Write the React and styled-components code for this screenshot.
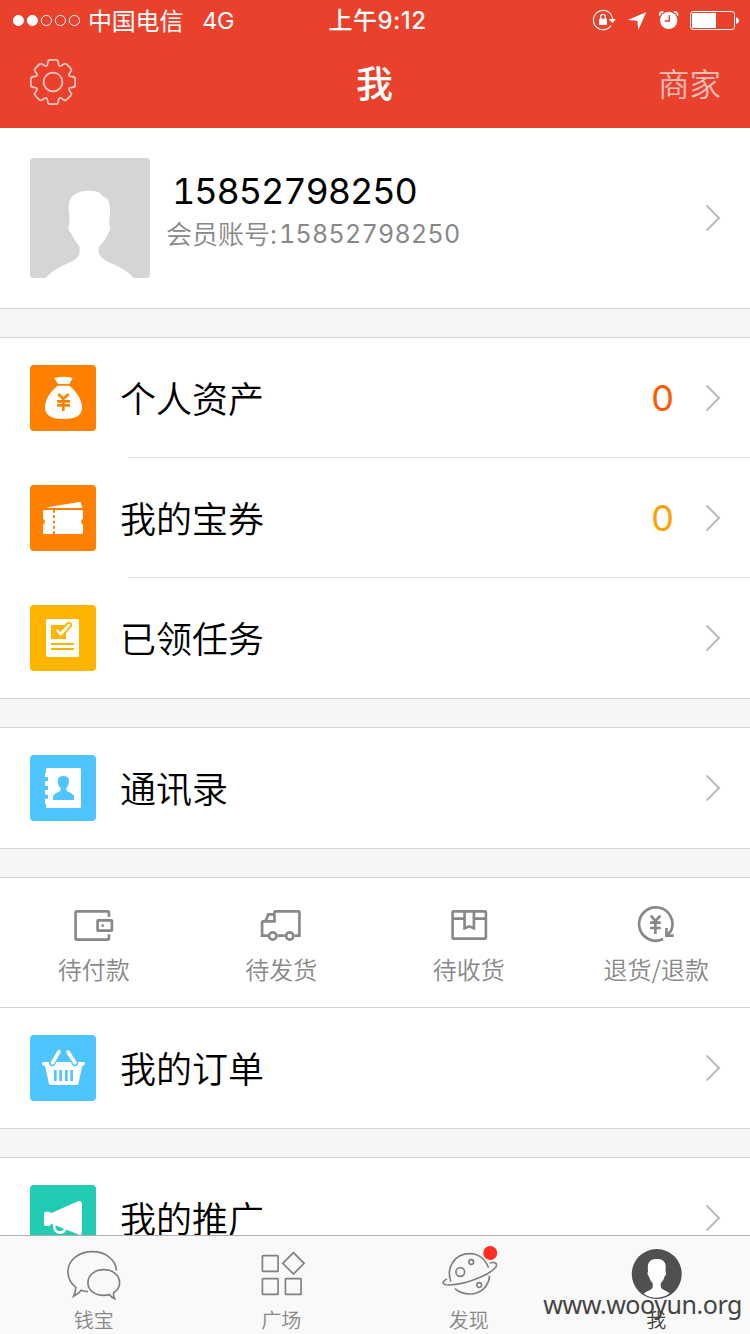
import React from 'react';
import styled, { createGlobalStyle } from 'styled-components';

const GlobalStyle = createGlobalStyle`
  *, *::before, *::after { box-sizing: border-box; }
  body { margin: 0; background: #fff; }
  svg { display: block; flex: none; }
`;

const latin = `Inter, "Noto Sans CJK SC", sans-serif`;
const cjk = `"Noto Sans CJK SC", sans-serif`;

const Screen = styled.div`
  position: relative;
  width: 750px;
  height: 1334px;
  overflow: hidden;
  display: flex;
  flex-direction: column;
  background: #f6f6f6;
  font-family: ${latin};
  color: #000;
`;

const Header = styled.header`
  flex: none;
  height: 128px;
  background: #ea412c;
  color: #fff;
`;

const StatusBar = styled.div`
  height: 40px;
  padding: 0 10px 0 12px;
  display: grid;
  grid-template-columns: 1fr auto 1fr;
  align-items: center;
`;

const StatusGroup = styled.div`
  display: flex;
  align-items: center;
  justify-content: ${(p) => (p.$end ? 'flex-end' : 'flex-start')};
`;

const Carrier = styled.span`
  margin-left: 7px;
  font: 400 24px/40px ${cjk};
  letter-spacing: -0.2px;
`;

const Network = styled.span`
  margin-left: 19px;
  padding-top: 2px;
  font: 400 23.5px/38px ${latin};
  letter-spacing: -0.5px;
`;

const Clock = styled.span`
  padding: 2px 0 0 3px;
  font: 500 24px/38px ${latin};
  letter-spacing: 0.5px;
`;

const NavBar = styled.div`
  height: 84px;
  padding: 0 29px 0 27px;
  display: grid;
  grid-template-columns: 1fr auto 1fr;
  align-items: center;
`;

const Title = styled.h1`
  margin: 0;
  padding-left: 1px;
  font: 500 37px/84px ${cjk};
`;

const NavAction = styled.span`
  justify-self: end;
  font: 350 31.5px/84px ${cjk};
  color: rgba(255, 255, 255, 0.68);
`;

const Content = styled.main`
  flex: 1;
  min-height: 0;
  overflow: hidden;
  display: flex;
  flex-direction: column;
  gap: 28px;
`;

const Section = styled.section`
  flex: none;
  background: #fff;
  border-top: ${(p) => (p.$first ? '0' : '1px solid #d2d2d2')};
  border-bottom: 1px solid #d2d2d2;
`;

const Profile = styled.div`
  height: 180px;
  padding: 0 29px 0 30px;
  display: flex;
  align-items: center;
`;

const Avatar = styled.div`
  width: 120px;
  height: 120px;
  border-radius: 4px;
  overflow: hidden;
  background: #d5d5d5;
`;

const ProfileText = styled.div`
  flex: 1;
  height: 120px;
  padding: 10px 0 0 16px;
`;

const Phone = styled.div`
  padding-left: 6px;
  font: 400 36px/46px ${latin};
  font-feature-settings: "tnum";
  letter-spacing: -1.1px;
`;

const Account = styled.div`
  display: flex;
  margin-top: -1px;
  font: 350 26px/40px ${cjk};
  color: #888;
`;

const AccountNumber = styled.span`
  margin: 1px 0 0 2px;
  font: 400 25px/40px ${latin};
  font-feature-settings: "tnum";
  letter-spacing: 0.3px;
`;

const RowBox = styled.div`
  height: 120px;
  padding-left: 30px;
  display: flex;
  align-items: center;
`;

const Tile = styled.div`
  width: 66px;
  height: 66px;
  border-radius: 4px;
  background: ${(p) => p.$color};
`;

const RowBody = styled.div`
  flex: 1;
  height: 120px;
  margin-left: 32px;
  padding-right: 29px;
  display: flex;
  align-items: center;
  border-bottom: 1px solid ${(p) => (p.$divider ? '#e4e4e4' : 'transparent')};
`;

const Label = styled.span`
  flex: 1;
  margin-left: -8px;
  padding-bottom: 2px;
  font: 350 36px/56px ${cjk};
`;

const Count = styled.span`
  margin-right: 32px;
  font: 400 36px/60px ${latin};
  color: ${(p) => p.$color};
`;

const Orders = styled.div`
  height: 130px;
  display: grid;
  grid-template-columns: repeat(4, 1fr);
  border-bottom: 1px solid #d2d2d2;
`;

const Order = styled.div`
  padding-top: 26px;
  display: flex;
  flex-direction: column;
  align-items: center;
  font: 350 24px/36px ${cjk};
  color: #888;

  span { margin-top: 7px; }
`;

const TabBar = styled.nav`
  flex: none;
  height: 99px;
  display: grid;
  grid-template-columns: repeat(4, 1fr);
  border-top: 1px solid #b0b0b0;
  background: #f9f9f9;
`;

const Tab = styled.div`
  padding-top: 10px;
  display: flex;
  flex-direction: column;
  align-items: center;
  font: 350 20px/30px ${cjk};
  color: ${(p) => (p.$active ? '#444' : '#888')};

  span { margin-top: 5px; }
`;

const Watermark = styled.div`
  position: absolute;
  right: 8px;
  bottom: 12px;
  font: 400 25px/36px "Noto Sans", sans-serif;
  letter-spacing: -0.45px;
  color: #444;
`;

function Chevron() {
  return (
    <svg width="15" height="28" viewBox="0 0 15 28" fill="none" stroke="#bbb" strokeWidth="2">
      <path d="M0.500 1.500 13 14 0.500 26.500" />
    </svg>
  );
}

function gearPath() {
  const pts = [];
  for (let i = 0; i < 8; i++) {
    [[-18.5, 17.4], [-12.8, 22.7], [12.8, 22.7], [18.5, 17.4]].forEach(([a, r]) => {
      const t = ((i * 45 + a - 90) * Math.PI) / 180;
      pts.push([r * Math.cos(t), r * Math.sin(t)]);
    });
  }
  const toward = (a, b, d) => {
    const l = Math.hypot(b[0] - a[0], b[1] - a[1]);
    const k = Math.min(d / l, 0.5);
    return `${(a[0] + (b[0] - a[0]) * k).toFixed(2)} ${(a[1] + (b[1] - a[1]) * k).toFixed(2)}`;
  };
  return pts
    .map((p, i) => {
      const prev = pts[(i + pts.length - 1) % pts.length];
      const next = pts[(i + 1) % pts.length];
      return `${i ? 'L' : 'M'}${toward(p, prev, 2.4)}Q${p[0].toFixed(2)} ${p[1].toFixed(2)} ${toward(p, next, 2.4)}`;
    })
    .join('') + 'Z';
}

function Gear() {
  return (
    <svg width="52" height="52" viewBox="-26 -26 52 52" fill="none" stroke="#fff" strokeOpacity=".7" strokeWidth="1.8">
      <path d={gearPath()} />
      <circle r="9.4" />
    </svg>
  );
}

function Signal() {
  return (
    <svg width="69" height="14" viewBox="0 0 69 14" fill="none" stroke="#fff">
      {[0, 1, 2, 3, 4].map((i) => (
        <circle key={i} cx={6.4 + i * 14} cy="7.5" r="5.1" fill={i < 2 ? '#fff' : 'none'} />
      ))}
    </svg>
  );
}

function StatusIcons() {
  return (
    <svg width="150" height="26" viewBox="645 21 450 78" fill="#fff">
      <path d="M709 45A29 29 0 1 0 708 77" fill="none" stroke="#fff" strokeWidth="3.5" />
      <path d="M708 45Q713 52 713 60" fill="none" stroke="#fff" strokeWidth="3.5" />
      <path d="M701 57h22l-11 12z" />
      <rect x="672" y="56" width="24" height="19" rx="2" />
      <path d="M677 57v-7a7 7 0 0 1 14 0v7" fill="none" stroke="#fff" strokeWidth="4" />
      <path d="M814 36 759 60l28 2 3 28z" />
      <circle cx="881" cy="61" r="26" />
      <path d="M854 47Q853 37 865 35M908 47Q909 37 897 35" fill="none" stroke="#fff" strokeWidth="5" />
      <path d="M883 45v18H869" fill="none" stroke="#ea412c" strokeWidth="4" />
      <rect x="946.500" y="34.500" width="132" height="54" rx="8" fill="none" stroke="#fff" strokeWidth="3" />
      <path d="M955 39h68v45h-68q-4 0-4-4V43q0-4 4-4z" />
      <path d="M1083 52q9 3 9 10t-9 10z" />
    </svg>
  );
}

function AvatarFigure() {
  return (
    <svg width="120" height="120" viewBox="90 54 360 360" fill="#fff">
      <path d="M137 414C155 392 180 380 207 368C227 359 239 349 239 337V321C228 308 219 292 213 279C206 275 205 265 206 258C210 245 209 232 207 215C204 190 208 177 221 166C236 154 252 152 270 152C290 152 301 157 308 169C328 175 331 193 330 215C329 235 327 245 328 253C332 261 331 272 325 279C318 295 309 310 296 321V337C300 350 311 360 329 368C359 380 383 393 401 414Z" />
    </svg>
  );
}

function BagIcon() {
  return (
    <svg width="66" height="66" viewBox="30 30 198 198" fill="#fff">
      <path d="M103 69Q130 62 158 69L148 87H114Z" />
      <path d="M113 92H148C164 103 186 132 186 156C186 182 170 192 130 192C91 192 75 180 75 156C75 130 97 104 113 92Z" />
      <path d="M115 117 130 131 146 117M130 131V168M111 139H150M111 151H150" fill="none" stroke="#ff8000" strokeWidth="8" />
    </svg>
  );
}

function TicketIcon() {
  return (
    <svg width="66" height="66" viewBox="30 390 198 198" fill="#fff">
      <path d="M82 457 178 441Q182 440 183 444L187 459H82Z" />
      <path d="M73 465H185Q189 465 189 469V491A10 10 0 0 0 189 509V533Q189 537 185 537H73Q69 537 69 533V509A10 10 0 0 0 69 491V469Q69 465 73 465Z" />
      <path d="M102 465V537" stroke="#ff8000" strokeWidth="6" strokeDasharray="8 8" />
    </svg>
  );
}

function TaskIcon() {
  return (
    <svg width="66" height="66" viewBox="30 45 198 198" fill="none">
      <rect x="78" y="87" width="99" height="114" rx="5" fill="#fff" />
      <path d="M93 105H138V147H93Z" fill="#ffb400" />
      <path d="M118 128 122 132 147 105" stroke="#ffb400" strokeWidth="19" strokeLinecap="round" />
      <path d="M112 122 122 132 147 105" stroke="#fff" strokeWidth="8" strokeLinecap="round" />
      <path d="M93 162H162M93 177H162" stroke="#ffb400" strokeWidth="6" />
    </svg>
  );
}

function ContactsIcon() {
  return (
    <svg width="66" height="66" viewBox="30 495 198 198" fill="#fff">
      <path d="M82 534H179Q183 534 183 538V650Q183 654 179 654H82Q78 654 78 650V641H75V626H84V614H75V600H84V587H75V574H84V561H75V549H78V538Q78 534 82 534Z" />
      <path d="M99 630V618Q101 612 120 604Q122 600 122 594Q113 587 113 573Q113 558 130 558Q147 558 147 573Q147 587 139 594Q139 600 141 604Q160 612 162 618V630Z" fill="#4fc5ff" />
    </svg>
  );
}

function BasketIcon() {
  return (
    <svg width="66" height="66" viewBox="30 45 198 198" fill="none" strokeLinecap="round">
      <path d="M70 126H191Q195 126 195 131Q195 137 187 137L175 192Q174 195 171 195H91Q88 195 87 192L75 137Q66 137 66 131Q66 126 70 126Z" fill="#fff" />
      <path d="M115 96 97 129M145 96 165 129" stroke="#4fc5ff" strokeWidth="19" />
      <path d="M117 95 98 128M144 96 165 128" stroke="#fff" strokeWidth="11" />
      <path d="M106 150V183M122 150V183M139 150V183M155 150V183" stroke="#4fc5ff" strokeWidth="8" strokeLinecap="butt" />
    </svg>
  );
}

function HornIcon() {
  return (
    <svg width="66" height="66" viewBox="30 495 198 198" fill="#fff">
      <path d="M76 575H88Q91 575 93 580L174 544Q186 540 186 554V633Q186 649 174 643L94 611Q91 618 87 618H76Q72 618 72 613V580Q72 575 76 575Z" />
      <path d="M103 612C101 630 109 638 120 638C130 638 134 633 137 625" fill="none" stroke="#fff" strokeWidth="8" />
    </svg>
  );
}

const orders = [
  {
    label: '待付款',
    box: '95.25 102 132 120',
    art: (
      <>
        <path d="M206 140V128Q206 124 202 124H110Q106 124 106 128V205Q106 209 110 209H202Q206 209 206 205V193" />
        <rect x="172" y="151" width="43" height="31" rx="2" />
        <circle cx="187" cy="167" r="4" fill="#888" stroke="none" />
      </>
    ),
  },
  {
    label: '待发货',
    box: '657.75 102 132 120',
    art: (
      <>
        <path d="M685 197H667V157Q667 154 670 154H704V127Q704 124 707 124H776Q779 124 779 127V197H765M735 197H714M677 154 686 133H704" />
        <circle cx="699" cy="198" r="11" />
        <circle cx="750" cy="198" r="11" />
      </>
    ),
  },
  {
    label: '待收货',
    box: '110.25 102 132 120',
    art: (
      <>
        <rect x="127" y="124" width="100" height="82" rx="3" />
        <path d="M127 146H163M191 146H227M163 124V175L177 169 191 175V124" />
      </>
    ),
  },
  {
    label: '退货/退款',
    box: '672.75 102 132 120',
    art: (
      <>
        <path d="M760 207A50 50 0 1 1 783 184L772 195" />
        <path d="M770 174V197H792" />
        <path d="M723 137 737 153 752 137M737 153V192M721 158H753M721 174H753" />
      </>
    ),
  },
];

const tabs = [
  {
    label: '钱宝',
    box: '71.25 48 180 162',
    art: (
      <>
        <path d="M229 122C226 88 195 65 156 65C115 65 83 91 83 125C83 145 93 161 107 172Q106 188 100 199Q115 192 123 181Q133 185 143 185" />
        <path d="M220 188C232 181 238 171 238 158C238 135 217 119 191 119C164 119 143 135 143 158C143 181 164 196 190 196Q200 196 207 194Q213 201 223 206Q219 198 220 188Z" />
      </>
    ),
  },
  {
    label: '广场',
    box: '633.75 48 180 162',
    art: (
      <>
        <rect x="668" y="77" width="47" height="47" rx="2" />
        <rect x="668" y="146" width="47" height="47" rx="2" />
        <rect x="737" y="146" width="47" height="47" rx="2" />
        <path d="M761 68 793 100 761 132 729 100Z" />
      </>
    ),
  },
  {
    label: '发现',
    box: '56.25 48 180 162',
    art: (
      <>
        <path d="M92 155C76 111 105 71 148 71C174 71 195 87 205 113M208 137C206 169 181 192 149 192C132 192 117 187 104 176" />
        <path d="M80 147C61 157 67 165 86 165C112 165 150 155 180 142C213 128 229 112 229 105C229 97 219 96 208 99" />
        <circle cx="120" cy="126" r="13" />
        <circle cx="153" cy="96" r="7" />
        <circle cx="177" cy="165" r="7" />
        <circle cx="210" cy="69" r="21" fill="#ff2d21" stroke="none" />
      </>
    ),
  },
  {
    label: '我',
    active: true,
    box: '618.75 48 180 162',
    art: (
      <>
        <circle cx="711" cy="132" r="75" fill="#505050" stroke="none" />
        <path d="M672 191C681 182 698 180 699 170V160C691 151 689 143 687 138C682 135 683 128 685 124C681 97 691 87 711 87C732 87 741 97 737 124C740 128 740 135 735 138C733 145 730 153 723 160V170C725 180 742 182 750 190C728 207 694 207 672 191Z" fill="#fff" stroke="none" />
      </>
    ),
  },
];

function Row({ icon, color, label, count, countColor, divider }) {
  return (
    <RowBox>
      <Tile $color={color}>{icon}</Tile>
      <RowBody $divider={divider}>
        <Label>{label}</Label>
        {count !== undefined && <Count $color={countColor}>{count}</Count>}
        <Chevron />
      </RowBody>
    </RowBox>
  );
}

export default function App() {
  return (
    <>
      <GlobalStyle />
      <Screen>
        <Header>
          <StatusBar>
            <StatusGroup>
              <Signal />
              <Carrier>中国电信</Carrier>
              <Network>4G</Network>
            </StatusGroup>
            <Clock>上午9:12</Clock>
            <StatusGroup $end>
              <StatusIcons />
            </StatusGroup>
          </StatusBar>
          <NavBar>
            <Gear />
            <Title>我</Title>
            <NavAction>商家</NavAction>
          </NavBar>
        </Header>

        <Content>
          <Section $first>
            <Profile>
              <Avatar><AvatarFigure /></Avatar>
              <ProfileText>
                <Phone>15852798250</Phone>
                <Account>会员账号:<AccountNumber>15852798250</AccountNumber></Account>
              </ProfileText>
              <Chevron />
            </Profile>
          </Section>

          <Section>
            <Row icon={<BagIcon />} color="#ff8000" label="个人资产" count="0" countColor="#ff5a00" divider />
            <Row icon={<TicketIcon />} color="#ff8000" label="我的宝券" count="0" countColor="#ff9f00" divider />
            <Row icon={<TaskIcon />} color="#ffb400" label="已领任务" />
          </Section>

          <Section>
            <Row icon={<ContactsIcon />} color="#4fc5ff" label="通讯录" />
          </Section>

          <Section>
            <Orders>
              {orders.map((o) => (
                <Order key={o.label}>
                  <svg width="44" height="40" viewBox={o.box} fill="none" stroke="#888" strokeWidth="8">{o.art}</svg>
                  <span>{o.label}</span>
                </Order>
              ))}
            </Orders>
            <Row icon={<BasketIcon />} color="#4fc5ff" label="我的订单" />
          </Section>

          <Section>
            <Row icon={<HornIcon />} color="#22ccb2" label="我的推广" />
          </Section>
        </Content>

        <TabBar>
          {tabs.map((t) => (
            <Tab key={t.label} $active={t.active}>
              <svg width="60" height="54" viewBox={t.box} fill="none" stroke="#808080" strokeWidth="5">{t.art}</svg>
              <span>{t.label}</span>
            </Tab>
          ))}
        </TabBar>
        <Watermark>www.wooyun.org</Watermark>
      </Screen>
    </>
  );
}
